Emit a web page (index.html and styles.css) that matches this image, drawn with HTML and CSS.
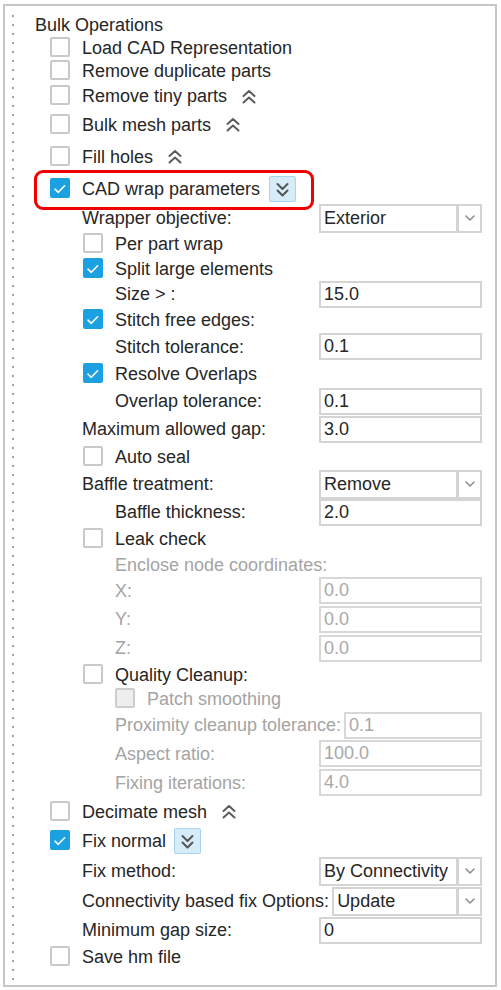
FILE: index.html
```html
<!DOCTYPE html>
<html>
<head>
<meta charset="utf-8">
<title>Bulk Operations</title>
<link rel="stylesheet" href="styles.css">
</head>
<body>
<div class="panel">
  <div class="gutter"></div>
  <div class="content">
    <div class="row h22 head">Bulk Operations</div>

    <div class="row h23 l1"><span class="cb"></span><span>Load CAD Representation</span></div>
    <div class="row h24 l1"><span class="cb"></span><span>Remove duplicate parts</span></div>
    <div class="row h26 l1"><span class="cb"></span><span>Remove tiny parts</span>
      <svg class="up" width="14" height="17" viewBox="0 0 14 17"><path d="M1.5 8 L7 3 L12.5 8 M1.5 14.5 L7 9.5 L12.5 14.5"/></svg></div>
    <div class="row h31 l1"><span class="cb"></span><span>Bulk mesh parts</span>
      <svg class="up" width="14" height="17" viewBox="0 0 14 17"><path d="M1.5 8 L7 3 L12.5 8 M1.5 14.5 L7 9.5 L12.5 14.5"/></svg></div>
    <div class="row h33 l1"><span class="cb"></span><span>Fill holes</span>
      <svg class="up" width="14" height="17" viewBox="0 0 14 17"><path d="M1.5 8 L7 3 L12.5 8 M1.5 14.5 L7 9.5 L12.5 14.5"/></svg></div>

    <div class="row h31 l1 marked">
      <span class="cb on"><svg width="16" height="16" viewBox="0 0 16 16"><polyline points="3,9.2 6.3,12.3 12.6,5.8"/></svg></span>
      <span>CAD wrap parameters</span>
      <span class="xp"><svg width="25" height="24" viewBox="0 0 25 24"><path d="M7.5 7 L12.5 12 L17.5 7 M7.5 13.5 L12.5 18.5 L17.5 13.5"/></svg></span>
      <span class="mark"></span>
    </div>

    <div class="row h28 f1"><span class="lbl">Wrapper objective:</span>
      <span class="sel"><span class="val">Exterior</span><span class="arr"><svg width="10" height="6" viewBox="0 0 10 6"><path d="M1 1 L5 5 L9 1"/></svg></span></span></div>
    <div class="row h24 l2"><span class="cb"></span><span>Per part wrap</span></div>
    <div class="row h25 l2"><span class="cb on"><svg width="16" height="16" viewBox="0 0 16 16"><polyline points="3,9.2 6.3,12.3 12.6,5.8"/></svg></span><span>Split large elements</span></div>
    <div class="row h26 f2"><span class="lbl">Size &gt; :</span><span class="inp">15.0</span></div>
    <div class="row h26 l2"><span class="cb on"><svg width="16" height="16" viewBox="0 0 16 16"><polyline points="3,9.2 6.3,12.3 12.6,5.8"/></svg></span><span>Stitch free edges:</span></div>
    <div class="row h27 f2"><span class="lbl">Stitch tolerance:</span><span class="inp">0.1</span></div>
    <div class="row h27 l2"><span class="cb on"><svg width="16" height="16" viewBox="0 0 16 16"><polyline points="3,9.2 6.3,12.3 12.6,5.8"/></svg></span><span>Resolve Overlaps</span></div>
    <div class="row h28 f2"><span class="lbl">Overlap tolerance:</span><span class="inp">0.1</span></div>
    <div class="row h28 f1"><span class="lbl">Maximum allowed gap:</span><span class="inp">3.0</span></div>
    <div class="row h27 l2"><span class="cb"></span><span>Auto seal</span></div>
    <div class="row h28 f1"><span class="lbl">Baffle treatment:</span>
      <span class="sel"><span class="val">Remove</span><span class="arr"><svg width="10" height="6" viewBox="0 0 10 6"><path d="M1 1 L5 5 L9 1"/></svg></span></span></div>
    <div class="row h28 f2"><span class="lbl">Baffle thickness:</span><span class="inp">2.0</span></div>
    <div class="row h26 l2"><span class="cb"></span><span>Leak check</span></div>
    <div class="row h25 f2 dis"><span class="lbl">Enclose node coordinates:</span></div>
    <div class="row h27 f2 dis"><span class="lbl">X:</span><span class="inp">0.0</span></div>
    <div class="row h30 f2 dis"><span class="lbl">Y:</span><span class="inp">0.0</span></div>
    <div class="row h28 f2 dis"><span class="lbl">Z:</span><span class="inp">0.0</span></div>
    <div class="row h25 l2"><span class="cb"></span><span>Quality Cleanup:</span></div>
    <div class="row h24 l3 dis"><span class="cb off"></span><span>Patch smoothing</span></div>
    <div class="row h28 f2 dis"><span class="lbl">Proximity cleanup tolerance:</span><span class="inp">0.1</span></div>
    <div class="row h29 f2 dis"><span class="lbl">Aspect ratio:</span><span class="inp">100.0</span></div>
    <div class="row h29 f2 dis"><span class="lbl">Fixing iterations:</span><span class="inp">4.0</span></div>

    <div class="row h29 l1"><span class="cb"></span><span>Decimate mesh</span>
      <svg class="up" width="14" height="17" viewBox="0 0 14 17"><path d="M1.5 8 L7 3 L12.5 8 M1.5 14.5 L7 9.5 L12.5 14.5"/></svg></div>
    <div class="row h30 l1">
      <span class="cb on"><svg width="16" height="16" viewBox="0 0 16 16"><polyline points="3,9.2 6.3,12.3 12.6,5.8"/></svg></span>
      <span>Fix normal</span>
      <span class="xp small"><svg width="25" height="24" viewBox="0 0 25 24"><path d="M7.5 7 L12.5 12 L17.5 7 M7.5 13.5 L12.5 18.5 L17.5 13.5"/></svg></span>
    </div>
    <div class="row h30 f1"><span class="lbl">Fix method:</span>
      <span class="sel"><span class="val">By Connectivity</span><span class="arr"><svg width="10" height="6" viewBox="0 0 10 6"><path d="M1 1 L5 5 L9 1"/></svg></span></span></div>
    <div class="row h30 f1"><span class="lbl">Connectivity based fix Options:</span>
      <span class="sel"><span class="val">Update</span><span class="arr"><svg width="10" height="6" viewBox="0 0 10 6"><path d="M1 1 L5 5 L9 1"/></svg></span></span></div>
    <div class="row h28 f1"><span class="lbl">Minimum gap size:</span><span class="inp">0</span></div>
    <div class="row h26 l1"><span class="cb"></span><span>Save hm file</span></div>
  </div>
</div>
</body>
</html>
```

FILE: styles.css
```css
* { box-sizing: border-box; }
html, body { margin: 0; padding: 0; background: #ffffff; }
body {
  width: 501px;
  height: 990px;
  overflow: hidden;
  font-family: "Liberation Sans", Arial, sans-serif;
  font-size: 18px;
  color: #262626;
}

.panel {
  display: flex;
  margin: 4px 0 0 3px;
  width: 494px;
  height: 983px;
  border: 2px solid #c6c6c6;
  background: #ffffff;
}

.gutter {
  flex: none;
  width: 30px;
  margin: 9px 0 4px;
  background-image: linear-gradient(to bottom, #a3a3a3 0 2px, transparent 2px 9px);
  background-size: 2px 9px;
  background-position: 7px 0;
  background-repeat: repeat-y;
}

.content {
  flex: 1;
  padding: 8px 13px 0 0;
}

.row {
  display: flex;
  align-items: center;
  white-space: nowrap;
  line-height: 20px;
}
.marked { position: relative; }

.h22 { height: 22px; } .h23 { height: 23px; } .h24 { height: 24px; }
.h25 { height: 25px; } .h26 { height: 26px; } .h27 { height: 27px; }
.h28 { height: 28px; } .h29 { height: 29px; } .h30 { height: 30px; }
.h31 { height: 31px; } .h33 { height: 33px; }

.l1 { padding-left: 15px; }
.l2 { padding-left: 48px; }
.l3 { padding-left: 80px; }
.f1 { padding-left: 47px; }
.f2 { padding-left: 80px; }

.f1 .lbl { min-width: 234px; margin-right: 3px; }
.f2 .lbl { min-width: 201px; margin-right: 3px; }

.dis { color: #a4a4a4; }

.cb {
  flex: none;
  width: 20px;
  height: 20px;
  margin: 0 12px 2px 0;
  border: 2px solid #c9c9c9;
  border-radius: 2px;
  background: #ffffff;
  display: flex;
}
.cb.on { background: #1ba1e2; border-color: #1ba1e2; }
.cb.off { background: #eeeeee; border-color: #cdcdcd; }
.cb svg polyline { fill: none; stroke: #ffffff; stroke-width: 1.6; stroke-linecap: round; stroke-linejoin: round; }

.up { flex: none; margin-left: 15px; }
.up path { fill: none; stroke: #5c5c5c; stroke-width: 2; stroke-linecap: round; stroke-linejoin: round; }

.xp {
  flex: none;
  width: 27px;
  height: 26px;
  margin-left: 9px;
  border: 1px solid #a9d4ef;
  border-radius: 2px;
  background: #d6ecf9;
  display: flex;
}
.xp.small { margin-left: 8px; }
.xp path { fill: none; stroke: #555555; stroke-width: 2; stroke-linecap: round; stroke-linejoin: round; }

.mark {
  position: absolute;
  left: -1px;
  top: -3px;
  width: 280px;
  height: 40px;
  border: 3px solid #f10000;
  border-radius: 9px;
}

.inp {
  flex: 1;
  height: 27px;
  padding: 0 3px;
  border: 2px solid #d4d4d4;
  background: #ffffff;
  line-height: 23px;
  color: #262626;
}
.dis .inp { color: #a8a8a8; border-color: #d8d8d8; }

.sel {
  flex: 1;
  display: flex;
  height: 29px;
}
.sel .val {
  flex: 1;
  padding: 0 3px;
  border: 2px solid #d4d4d4;
  line-height: 25px;
}
.sel .arr {
  flex: none;
  width: 24px;
  border: 2px solid #d4d4d4;
  border-left-width: 1px;
  display: flex;
  align-items: center;
  justify-content: center;
}
.sel .arr path { fill: none; stroke: #8a8a8a; stroke-width: 1.5; stroke-linecap: round; stroke-linejoin: round; }
```
